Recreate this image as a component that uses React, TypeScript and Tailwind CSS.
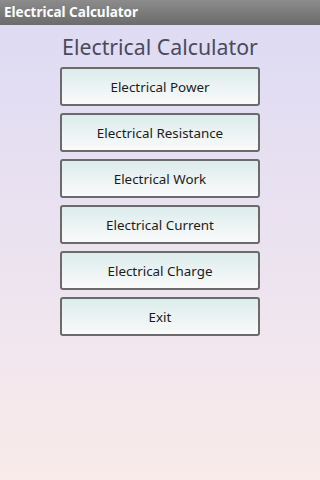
const items = [
  "Electrical Power",
  "Electrical Resistance",
  "Electrical Work",
  "Electrical Current",
  "Electrical Charge",
  "Exit",
];

export default function App() {
  return (
    <div
      className="flex h-[480px] w-[320px] flex-col overflow-hidden"
      style={{ fontFamily: '"Noto Sans", "Open Sans", sans-serif' }}
    >
      {/* Title bar */}
      <div className="flex h-[25px] shrink-0 items-center bg-gradient-to-b from-[#8c8c8c] to-[#6b6b6b] px-[4px]">
        <span className="text-[13.5px] font-bold leading-none text-white">
          Electrical Calculator
        </span>
      </div>

      {/* Content */}
      <div className="flex flex-1 flex-col items-center bg-gradient-to-b from-[#dedbf3] via-[#ece3f0] to-[#f9ebea]">
        <h1 className="mt-[8px] text-[21.3px] leading-[28px] text-[#4a4a5c]">
          Electrical Calculator
        </h1>
        <div className="mt-[6px] flex flex-col gap-[7px]">
          {items.map((label) => (
            <button
              key={label}
              className="flex h-[39px] w-[200px] items-center justify-center rounded-[3px] border-2 border-[#6b6b6b] bg-gradient-to-b from-[#dcecec] to-[#fafafa] pt-[1px] text-[13.4px] text-[#1c1c1c]"
            >
              {label}
            </button>
          ))}
        </div>
      </div>
    </div>
  );
}
